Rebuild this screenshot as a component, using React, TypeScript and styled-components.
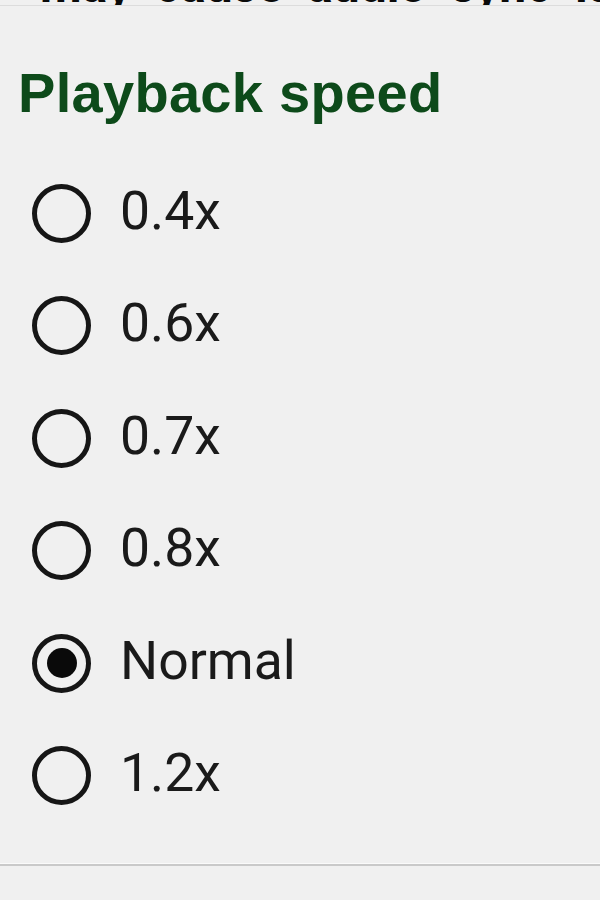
import React, { useState } from "react";
import styled, { createGlobalStyle } from "styled-components";

const Global = createGlobalStyle`
  html, body { margin: 0; padding: 0; background: #f0f0f0; }
  body { font-family: Roboto, "Liberation Sans", Arial, sans-serif; }
`;

const Page = styled.div`
  width: 600px;
  height: 900px;
  background: #f0f0f0;
  display: flex;
  flex-direction: column;
  overflow: hidden;
`;

const TopStrip = styled.div`
  height: 5px;
  overflow: hidden;
  flex: none;
  border-bottom: 1px solid #dcdcdc;
`;

const TopText = styled.div`
  margin-top: -38px;
  font-size: 48px;
  line-height: 48px;
  font-weight: 700;
  color: #0a0a0a;
  white-space: nowrap;
  padding-left: 40px;
  word-spacing: 12px;
`;

const Title = styled.h1`
  margin: 58px 0 0 18px;
  font-family: "Liberation Sans", Arial, sans-serif;
  font-size: 56px;
  line-height: 57px;
  font-weight: 700;
  color: #0d4a1a;
  letter-spacing: 0.3px;
`;

const List = styled.div`
  margin-top: 36px;
  display: flex;
  flex-direction: column;
`;

const Row = styled.label`
  height: 112.5px;
  display: flex;
  align-items: center;
  padding-left: 32px;
  gap: 29px;
  cursor: pointer;
`;

const Radio = styled.span<{ $checked: boolean }>`
  width: 59px;
  height: 59px;
  box-sizing: border-box;
  border: 5px solid #161616;
  border-radius: 50%;
  display: flex;
  align-items: center;
  justify-content: center;
  flex: none;
  &::after {
    content: "";
    width: 30px;
    height: 30px;
    border-radius: 50%;
    background: #0a0a0a;
    display: ${(p) => (p.$checked ? "block" : "none")};
  }
`;

const Label = styled.span`
  font-family: Roboto, "Liberation Sans", Arial, sans-serif;
  font-size: 53.5px;
  line-height: 60px;
  color: #1a1a1a;
  margin-top: -5px;
`;

const Divider = styled.div`
  margin-top: 31px;
  height: 2px;
  background: #c9c9c9;
  border-top: 1px solid #fafafa;
`;

const options = ["0.4x", "0.6x", "0.7x", "0.8x", "Normal", "1.2x"];

export default function App() {
  const [value, setValue] = useState("Normal");
  return (
    <Page>
      <Global />
      <TopStrip>
        <TopText>may cause audio sync issues</TopText>
      </TopStrip>
      <Title>Playback speed</Title>
      <List>
        {options.map((o) => (
          <Row key={o} onClick={() => setValue(o)}>
            <Radio $checked={value === o} />
            <Label>{o}</Label>
          </Row>
        ))}
      </List>
      <Divider />
    </Page>
  );
}
